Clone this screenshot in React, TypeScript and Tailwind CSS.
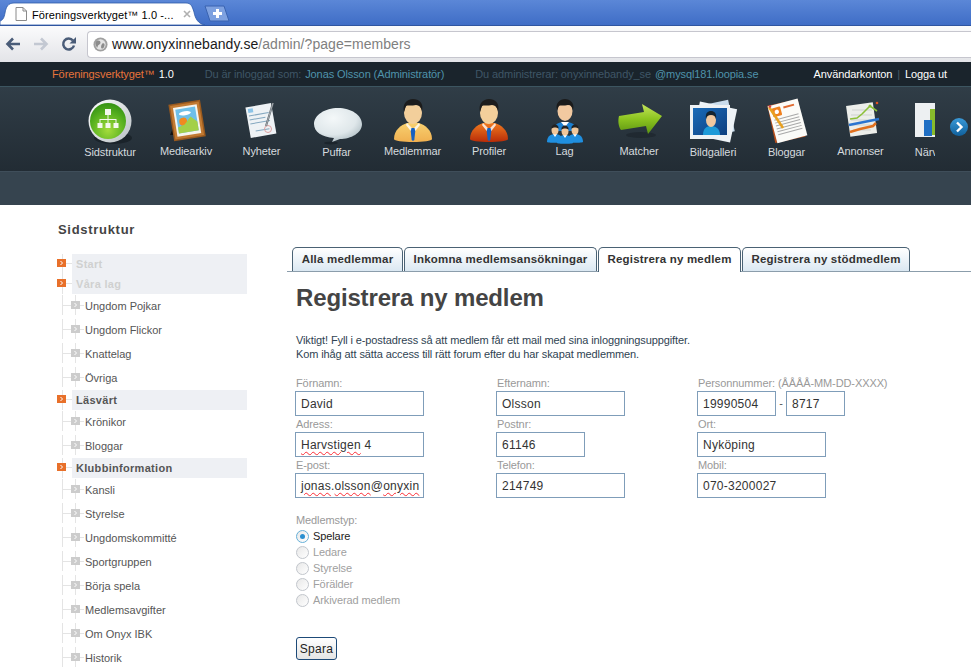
import type { ReactNode } from "react";

const Icon = ({ children }: { children: ReactNode }) => (
  <svg viewBox="0 0 60 48" width="60" height="48" className="block">
    {children}
  </svg>
);

const Person = ({ from, to, id }: { from: string; to: string; id: string }) => (
  <Icon>
    <defs>
      <linearGradient id={id} x1="0" y1="0" x2="0" y2="1">
        <stop offset="0" stopColor={from} />
        <stop offset="1" stopColor={to} />
      </linearGradient>
    </defs>
    <path d="M11 42c0-9 7-14 13-16h12c6 2 13 7 13 16 0 2-9 3-19 3s-19-1-19-3z" fill={`url(#${id})`} />
    <path d="M24 26l6 6 6-6 1 2-7 9-7-9z" fill="#fff" opacity="0.8" />
    <path d="M28.500 31h3l.8 3-1 9-1.300 1-1.300-1-1-9z" fill="#1560c0" />
    <ellipse cx="30" cy="16" rx="9" ry="11" fill="#f3cf9b" />
    <path d="M21 15c-2-8 3-13 9-13s11 4 9 12c-1-4-3-6-6-6-4 1-9 0-10 1-1 2-1 4-2 6z" fill="#1c1c1c" />
  </Icon>
);

const MiniPerson = ({ x, y }: { x: number; y: number }) => (
  <g transform={`translate(${x} ${y})`}>
    <path d="M-8 14c0-6 4-8 8-8s8 2 8 8c0 1-16 1-16 0z" fill="#1f8fe0" />
    <path d="M-2 6l2 3 2-3z" fill="#fff" />
    <ellipse cx="0" cy="2" rx="3.500" ry="4.500" fill="#f0c79b" />
    <path d="M-3.500 1c-.5-3 1.500-4.500 3.500-4.500s4 1.500 3.500 4.500c-1-2-6-2-7 0z" fill="#222" />
  </g>
);

const Sidstruktur = () => (
  <Icon>
    <defs>
      <radialGradient id="gs" cx="0.5" cy="0.75" r="0.8">
        <stop offset="0" stopColor="#a5dc3c" />
        <stop offset="0.6" stopColor="#56b01f" />
        <stop offset="1" stopColor="#2f8c12" />
      </radialGradient>
      <linearGradient id="gr" x1="0" y1="0" x2="1" y2="1">
        <stop offset="0" stopColor="#ffffff" />
        <stop offset="1" stopColor="#b9c0c4" />
      </linearGradient>
    </defs>
    <ellipse cx="33" cy="41" rx="19" ry="6" fill="#10181d" opacity="0.55" />
    <circle cx="30" cy="24" r="21.500" fill="url(#gr)" />
    <circle cx="28" cy="24" r="18" fill="url(#gs)" />
    <g fill="#f4f8ee">
      <rect x="25" y="12" width="6" height="6" />
      <rect x="17.500" y="26" width="5" height="5" />
      <rect x="25.500" y="26" width="5" height="5" />
      <rect x="33.500" y="26" width="5" height="5" />
      <path d="M27.500 18h1v4h8v4h-1v-3h-7v3h-1v-3h-7v3h-1v-4h8z" />
    </g>
  </Icon>
);

const Mediearkiv = () => (
  <Icon>
    <path d="M14 38l3-7 2 7z" fill="#111" />
    <g transform="rotate(-9 31 23)">
      <rect x="15" y="5" width="32" height="37" fill="#9a5a1e" />
      <rect x="16.500" y="6.500" width="29" height="34" fill="#c27a32" />
      <rect x="19" y="9" width="24" height="29" fill="#f5f5ee" />
      <rect x="21" y="11" width="20" height="24" fill="#6dbfe8" />
      <ellipse cx="30" cy="16" rx="6" ry="2" fill="#fff" />
      <circle cx="27" cy="24" r="4" fill="#f08a20" />
      <path d="M21 35v-6l7-2 7-7 6 6v9z" fill="#a3d048" />
    </g>
  </Icon>
);

const Nyheter = () => (
  <Icon>
    <g transform="rotate(-10 29 24)">
      <rect x="16" y="8" width="26" height="31" fill="#eef2f5" />
      <rect x="18" y="10" width="5" height="4" fill="#8cc4e8" />
      <path d="M18 17h20M18 21h16M18 25h20M22 33h14" stroke="#84a8c0" strokeWidth="1" />
    </g>
    <circle cx="36" cy="32" r="3.500" fill="none" stroke="#dca0a0" strokeWidth="1" />
    <path d="M41 6l-7 23" stroke="#5a6268" strokeWidth="2" />
    <path d="M41 6l-7 23" stroke="#c4cad0" strokeWidth="0.700" />
  </Icon>
);

const Puffar = () => (
  <Icon>
    <defs>
      <radialGradient id="gp" cx="0.4" cy="0.3" r="0.8">
        <stop offset="0" stopColor="#f4f8f9" />
        <stop offset="0.6" stopColor="#dfe7ea" />
        <stop offset="1" stopColor="#a3b3ba" />
      </radialGradient>
    </defs>
    <ellipse cx="24" cy="46" rx="7" ry="1.500" fill="#10181d" opacity="0.5" />
    <path d="M7 28c0-9 11-16 24-16s24 7 24 16-11 15-22 15l-8 3 2-4C15 41 7 36 7 28z" fill="url(#gp)" transform="translate(0 -1)" />
  </Icon>
);

const Lag = () => (
  <Icon>
    <path d="M18 34c0-6 5-9 12-9s12 3 12 9z" fill="#1b7fd0" />
    <path d="M26 25l4 5 4-5z" fill="#fff" />
    <ellipse cx="30" cy="14" rx="7.500" ry="10" fill="#f2c9a0" />
    <path d="M22 13c-2-7 3-11 8-11s10 4 8 11c-1-3-2-5-5-5-4 1-8 0-9 1-1 1-1 3-2 4z" fill="#1b1b1b" />
    <MiniPerson x={20} y={31} />
    <MiniPerson x={40} y={31} />
    <MiniPerson x={30} y={32} />
  </Icon>
);

const Matcher = () => (
  <Icon>
    <defs>
      <linearGradient id="gm" x1="0" y1="0" x2="0" y2="1">
        <stop offset="0" stopColor="#c4e35a" />
        <stop offset="0.5" stopColor="#8cc420" />
        <stop offset="1" stopColor="#5c9412" />
      </linearGradient>
    </defs>
    <ellipse cx="32" cy="38" rx="15" ry="3" fill="#10181d" opacity="0.35" />
    <path d="M10 19l25-4-2-8 20 12-14 18-2-8-25 4c-3-4-3-10-2-14z" fill="url(#gm)" />
  </Icon>
);

const Bildgalleri = () => (
  <Icon>
    <rect x="13" y="6" width="36" height="32" fill="#c9dcec" transform="rotate(-12 32 23)" />
    <rect x="13" y="8" width="38" height="34" fill="#eef3f7" transform="rotate(12 32 25)" />
    <rect x="7" y="8" width="40" height="34" fill="#eef2f5" />
    <defs>
      <linearGradient id="gb" x1="0" y1="0" x2="1" y2="1">
        <stop offset="0" stopColor="#1a6bb8" />
        <stop offset="1" stopColor="#0d3f80" />
      </linearGradient>
    </defs>
    <rect x="10" y="11" width="34" height="27" fill="url(#gb)" />
    <path d="M20 38c0-7 4-9 8-9s9 2 9 9z" fill="#1d9ad8" />
    <ellipse cx="28" cy="23" rx="5" ry="7" fill="#f0c8a0" />
    <path d="M23 22c-1-6 2-8 5-8s6 2 5 8c-1-3-2-4-5-4s-4 1-5 4z" fill="#152430" />
  </Icon>
);

const Bloggar = () => (
  <Icon>
    <rect x="14" y="5" width="31" height="38" fill="#b9501c" transform="rotate(-12 30 24)" />
    <rect x="15" y="5" width="31" height="38" fill="#fbfbf8" transform="rotate(-15 30 24)" />
    <g transform="rotate(-15 30 24)">
      <rect x="18" y="8" width="9" height="9" rx="1" fill="#f0801e" />
      <circle cx="22.500" cy="12.500" r="2.200" fill="#fff" />
      <path d="M30 10h11" stroke="#e06a30" strokeWidth="2" />
      <path d="M18 20h25M18 23h25M18 26h25M18 29h25M18 32h25M18 35h25" stroke="#a8a8a8" strokeWidth="1" />
    </g>
    <path d="M12 10l14 21" stroke="#e8a020" strokeWidth="2.500" />
    <path d="M12 10l2-1" stroke="#d04050" strokeWidth="2" />
  </Icon>
);

const Annonser = () => (
  <Icon>
    <rect x="17" y="7" width="27" height="31" fill="#eceeea" transform="rotate(-8 30 22)" />
    <path d="M21 13h20M20 18h21M20 23h21M21 28h20M22 33h18" stroke="#cfd2cf" strokeWidth="1" />
    <path d="M19 22l7-1 5-4 8-8 7 5" fill="none" stroke="#8cc038" strokeWidth="1.600" />
    <path d="M18 28l30-6" stroke="#2a74d0" strokeWidth="2.500" />
    <path d="M19 35l10-3 13-3 3-3" fill="none" stroke="#e0701e" strokeWidth="2.500" />
    <circle cx="39" cy="9" r="1.500" fill="#8cc038" />
    <circle cx="46" cy="6" r="1.300" fill="#e05020" />
  </Icon>
);

const Narvaro = () => (
  <Icon>
    <rect x="11" y="6" width="30" height="34" fill="#edf0f2" />
    <rect x="26" y="12" width="8" height="26" fill="#88bc2c" />
    <rect x="20" y="23" width="8" height="16" fill="#1f6fc4" />
  </Icon>
);

const navItems = [
  { label: "Sidstruktur", icon: <Sidstruktur />, width: "w-[76px]", gap: "mt-[-1px]" },
  { label: "Mediearkiv", icon: <Mediearkiv />, width: "w-[76px]", gap: "mt-[-2px]" },
  { label: "Nyheter", icon: <Nyheter />, width: "w-[75px]", gap: "mt-[-2px]" },
  { label: "Puffar", icon: <Puffar />, width: "w-[75px]", gap: "mt-[-1px]" },
  { label: "Medlemmar", icon: <Person id="p1" from="#f8d070" to="#f0b050" />, width: "w-[77px]", gap: "mt-[-2px]" },
  { label: "Profiler", icon: <Person id="p2" from="#f07a20" to="#b82c08" />, width: "w-[76px]", gap: "mt-[-2px]" },
  { label: "Lag", icon: <Lag />, width: "w-[75px]", gap: "mt-[-2px]" },
  { label: "Matcher", icon: <Matcher />, width: "w-[74px]", gap: "mt-[-2px]" },
  { label: "Bildgalleri", icon: <Bildgalleri />, width: "w-[74px]", gap: "mt-[-1px]" },
  { label: "Bloggar", icon: <Bloggar />, width: "w-[73px]", gap: "mt-[-1px]" },
  { label: "Annonser", icon: <Annonser />, width: "w-[75px]", gap: "mt-[-2px]" },
  { label: "Närvaro", icon: <Narvaro />, width: "w-[72px]", gap: "mt-[-1px]" },
];

const Chevron = () => (
  <svg viewBox="0 0 9 8" width="9" height="8" className="block">
    <path d="M3.500 2l2 2-2 2" fill="none" stroke="#fff" strokeWidth="1" />
  </svg>
);

const TopRow = ({ label, muted }: { label: string; muted?: boolean }) => (
  <div className="relative flex h-5 items-center pl-[72px]">
    <span className="absolute left-[62px] top-0 h-full w-px bg-[#e4e4e4]" />
    <span className="absolute left-[62px] top-[9px] h-px w-[10px] bg-[#e4e4e4]" />
    <span className="absolute left-[57px] top-[5px] bg-[#e8702a]">
      <Chevron />
    </span>
    <div className={`flex h-5 w-[175px] items-center bg-[#eef0f4] pl-[4px] text-[11px] font-bold tracking-[0.3px] ${muted ? "text-[#d0d0d0]" : "text-[#555555]"}`}>
      {label}
    </div>
  </div>
);

const SubRow = ({ label }: { label: string }) => (
  <div className="relative flex h-6 items-center pl-[85px] text-[11px] text-[#555555]">
    <span className="absolute left-[62px] top-[1px] h-[20px] w-px bg-[#e4e4e4]" />
    <span className="absolute left-[75px] top-[1px] h-[20px] w-px bg-[#e4e4e4]" />
    <span className="absolute left-[62px] top-[11px] h-px w-[22px] bg-[#e4e4e4]" />
    <span className="absolute left-[71px] top-[7px] bg-[#cccccc]">
      <Chevron />
    </span>
    <span className="relative">{label}</span>
  </div>
);

const tree: { label: string; muted?: boolean; sub: string[] }[] = [
  { label: "Start", muted: true, sub: [] },
  { label: "Våra lag", muted: true, sub: ["Ungdom Pojkar", "Ungdom Flickor", "Knattelag", "Övriga"] },
  { label: "Läsvärt", sub: ["Krönikor", "Bloggar"] },
  {
    label: "Klubbinformation",
    sub: ["Kansli", "Styrelse", "Ungdomskommitté", "Sportgruppen", "Börja spela", "Medlemsavgifter", "Om Onyx IBK", "Historik"],
  },
];

const tabs = [
  { label: "Alla medlemmar", width: "w-[111px]" },
  { label: "Inkomna medlemsansökningar", width: "w-[193px]" },
  { label: "Registrera ny medlem", width: "w-[143px]", active: true },
  { label: "Registrera ny stödmedlem", width: "w-[168px]" },
];

const Field = ({ label, width, children }: { label: string; width: string; children: ReactNode }) => (
  <div>
    <div className="h-4 pl-[1px] text-[11px] leading-4 tracking-[-0.1px] text-[#999999]">{label}</div>
    <TextBox width={width}>{children}</TextBox>
  </div>
);

const TextBox = ({ width, children }: { width: string; children: ReactNode }) => (
  <div className={`flex h-[25px] items-center overflow-hidden whitespace-nowrap border border-[#7f9db9] bg-white pl-[5px] text-[12px] tracking-[0.25px] text-[#333333] ${width}`}>
    {children}
  </div>
);

const Squiggle = ({ children }: { children: ReactNode }) => (
  <span className="underline decoration-red-500 decoration-wavy decoration-1 underline-offset-2">{children}</span>
);

const radios = ["Spelare", "Ledare", "Styrelse", "Förälder", "Arkiverad medlem"];

export default function App() {
  return (
    <div className="h-[670px] w-[971px] overflow-hidden bg-white font-['Liberation_Sans',Arial,sans-serif]">
      {/* browser tabs */}
      <div className="flex h-[25px] items-end bg-gradient-to-b from-[#5b87d7] to-[#3f6dc6]">
        <div className="relative h-[23px] w-[205px] shrink-0">
          <svg viewBox="0 0 205 23" width="205" height="23" className="absolute left-0 top-0">
            <path d="M0 19c3-1 4-3 5-8 1-6 3-10 9-10h172c5 0 6 3 8 9 1 6 4 12 11 13H0z" fill="#fff" stroke="#2d5aa8" strokeWidth="0.800" />
          </svg>
          <svg viewBox="0 0 12 14" width="12" height="14" className="absolute left-[15px] top-[5px]">
            <path d="M1 .5h7l3.500 3.500v9.500H1z" fill="#fff" stroke="#8a8a8a" />
            <path d="M8 .5V4h3.500" fill="none" stroke="#8a8a8a" />
          </svg>
          <div className="absolute left-[32px] top-[5px] text-[11px] tracking-[0.1px] text-black">Föreningsverktyget™ 1.0 -...</div>
          <svg viewBox="0 0 8 8" width="8" height="8" className="absolute left-[183px] top-[8px]">
            <path d="M1 1l6 6M7 1L1 7" stroke="#b0b0b0" strokeWidth="1.600" />
          </svg>
        </div>
        <svg viewBox="0 0 26 17" width="26" height="17" className="mb-[3px] ml-[-1px] shrink-0">
          <path d="M1 1h19l5 15H6z" fill="#7ea1e0" stroke="#3a63b0" />
          <path d="M13.500 4v9M9 8.500h9" stroke="#fff" strokeWidth="3" />
        </svg>
      </div>

      {/* browser toolbar */}
      <div className="flex h-[37px] items-center border-t border-[#2f55a0] bg-gradient-to-b from-[#fbfbfc] to-[#e3e4e8]">
        <svg viewBox="0 0 16 14" width="16" height="14" className="ml-[5px] shrink-0">
          <path d="M15 7H3M8 1.500L2.500 7 8 12.500" fill="none" stroke="#4a5c78" strokeWidth="2.600" />
        </svg>
        <svg viewBox="0 0 16 14" width="16" height="14" className="ml-[12px] shrink-0">
          <path d="M1 7h12M8 1.500L13.500 7 8 12.500" fill="none" stroke="#c3c8d2" strokeWidth="2.600" />
        </svg>
        <svg viewBox="0 0 16 16" width="16" height="16" className="ml-[12px] shrink-0">
          <path d="M13 9.500A5.500 5.500 0 1 1 12 4.500" fill="none" stroke="#4a5c78" strokeWidth="2.500" />
          <path d="M15 1v6.500H8.500z" fill="#4a5c78" />
        </svg>
        <div className="ml-[10px] flex h-[27px] flex-1 items-center rounded-l-[4px] border border-r-0 border-[#c6c6ce] bg-white pl-[5px]">
          <svg viewBox="0 0 16 16" width="15" height="15" className="shrink-0">
            <circle cx="8" cy="8" r="7.500" fill="#a0a0a0" />
            <circle cx="8" cy="8" r="5.500" fill="#e4e4e4" />
            <path d="M4 4c2-1 4 0 4 2s-3 2-3 4-1 1-2-1 0-4 1-5zm6 3c2-1 3 1 2 3s-2 3-3 2 0-4 1-5z" fill="#8c8c8c" />
          </svg>
          <div className="ml-[4px] whitespace-nowrap text-[14px] tracking-[0.05px] text-[#1a1a1a]">
            www.onyxinnebandy.se<span className="text-[#808080]">/admin/?page=members</span>
          </div>
        </div>
      </div>

      {/* admin top bar */}
      <div className="flex h-[25px] items-center border-b border-[#3c5560] bg-[#1a242c] pl-[52px] text-[11px] tracking-[-0.1px] text-[#3f5666]">
        <span className="text-[#e8743b]">Föreningsverktyget™</span>
        <span className="ml-[4px] text-white">1.0</span>
        <span className="ml-[31px]">Du är inloggad som:</span>
        <span className="ml-[4px] text-[#4f93ab]">Jonas Olsson (Administratör)</span>
        <span className="ml-[31px]">Du administrerar: onyxinnebandy_se</span>
        <span className="ml-[4px] text-[#4f93ab]">@mysql181.loopia.se</span>
        <span className="ml-auto text-white">Användarkonton</span>
        <span className="mx-[5px] text-[#4a5a66]">|</span>
        <span className="mr-[24px] text-white">Logga ut</span>
      </div>

      {/* icon menu */}
      <div className="flex h-[85px] items-start border-b border-[#3f4e5a] bg-gradient-to-b from-[#303d47] to-[#222c34] pl-[72px]">
        <div className="flex w-[863px] shrink-0 overflow-hidden pt-[10px]">
          {navItems.map((item) => (
            <div key={item.label} className={`flex shrink-0 flex-col items-center ${item.width}`}>
              {item.icon}
              <div className={`text-[11px] leading-4 tracking-[-0.1px] text-[#d5dade] ${item.gap}`}>{item.label}</div>
            </div>
          ))}
        </div>
        <svg viewBox="0 0 18 18" width="18" height="18" className="ml-[15px] mt-[31px] shrink-0">
          <defs>
            <linearGradient id="ga" x1="0" y1="0" x2="0" y2="1">
              <stop offset="0" stopColor="#3a9ad8" />
              <stop offset="1" stopColor="#10609c" />
            </linearGradient>
          </defs>
          <circle cx="9" cy="9" r="9" fill="url(#ga)" />
          <path d="M7 4.500L11.500 9 7 13.500" fill="none" stroke="#fff" strokeWidth="2.400" />
        </svg>
      </div>

      <div className="h-[33px] bg-[#36444f]" />

      <div className="flex">
        {/* page tree */}
        <div className="w-[287px] shrink-0">
          <div className="ml-[58px] mt-[15px] h-5 text-[13px] font-bold leading-5 tracking-[0.7px] text-[#444444]">Sidstruktur</div>
          <div className="mt-[14px]">
            {tree.map((group) => (
              <div key={group.label}>
                <TopRow label={group.label} muted={group.muted} />
                {group.sub.map((s) => (
                  <SubRow key={s} label={s} />
                ))}
              </div>
            ))}
          </div>
        </div>

        {/* member form */}
        <div className="flex-1 pt-[42px]">
          <div className="flex h-[25px] items-end gap-[1px] border-b border-[#8b9dab] pl-[5px]">
            {tabs.map((tab) => (
              <div
                key={tab.label}
                className={`flex shrink-0 items-center justify-center rounded-t-[5px] border border-[#4a6274] text-[11.500px] font-bold tracking-[0.2px] text-[#333333] ${tab.width} ${
                  tab.active ? "mb-[-1px] h-[25px] border-b-0 bg-white" : "h-[24px] border-b-0 bg-gradient-to-b from-[#ffffff] to-[#dbe8f2]"
                }`}
              >
                {tab.label}
              </div>
            ))}
          </div>

          <div className="pl-[8px]">
            <h1 className="ml-[1px] mt-[14px] h-6 text-[24px] font-bold leading-6 tracking-[-0.15px] text-[#444444]">Registrera ny medlem</h1>
            <p className="ml-[1px] mt-[23px] text-[11px] leading-[14px] tracking-[-0.11px] text-[#2f4352]">
              Viktigt! Fyll i e-postadress så att medlem får ett mail med sina inloggningsuppgifter.
              <br />
              Kom ihåg att sätta access till rätt forum efter du har skapat medlemmen.
            </p>

            <div className="mt-[14px] grid grid-cols-[201px_201px_260px]">
              <Field label="Förnamn:" width="w-[129px]">David</Field>
              <Field label="Efternamn:" width="w-[129px]">Olsson</Field>
              <div>
                <div className="h-4 pl-[1px] text-[11px] leading-4 tracking-[-0.1px] text-[#999999]">Personnummer: (ÅÅÅÅ-MM-DD-XXXX)</div>
                <div className="flex items-center">
                  <TextBox width="w-[79px]">19990504</TextBox>
                  <span className="w-[10px] text-center text-[11px] text-[#555555]">-</span>
                  <TextBox width="w-[59px]">8717</TextBox>
                </div>
              </div>
              <Field label="Adress:" width="w-[129px]">
                <Squiggle>Harvstigen</Squiggle>&nbsp;4
              </Field>
              <Field label="Postnr:" width="w-[89px]">61146</Field>
              <Field label="Ort:" width="w-[129px]">Nyköping</Field>
              <Field label="E-post:" width="w-[129px]">
                <Squiggle>jonas</Squiggle>.<Squiggle>olsson</Squiggle>@<Squiggle>onyxin</Squiggle>
              </Field>
              <Field label="Telefon:" width="w-[129px]">214749</Field>
              <Field label="Mobil:" width="w-[129px]">070-3200027</Field>
            </div>

            <div className="ml-[1px] mt-[15px] h-[15px] text-[11px] leading-[15px] tracking-[-0.1px] text-[#999999]">Medlemstyp:</div>
            {radios.map((r, i) => (
              <div key={r} className={`flex h-4 items-center text-[11px] tracking-[-0.1px] ${i === 0 ? "text-[#222222]" : "text-[#a0a0a0]"}`}>
                <span className={`ml-[1px] flex h-[13px] w-[13px] items-center justify-center rounded-full border bg-gradient-to-br from-[#e8e8e8] to-white ${i === 0 ? "border-[#66b0d8]" : "border-[#c2c6cc]"}`}>
                  {i === 0 && <span className="h-[5px] w-[5px] rounded-full bg-[#2a8fd0]" />}
                </span>
                <span className="ml-[4px]">{r}</span>
              </div>
            ))}

            <button className="ml-[1px] mt-[29px] flex h-[23px] w-[41px] items-center justify-center rounded-[3px] border border-[#1d4a78] bg-gradient-to-b from-white to-[#e4e4e4] text-[12px] tracking-[0.3px] text-[#222222]">
              Spara
            </button>
          </div>
        </div>
      </div>
    </div>
  );
}
